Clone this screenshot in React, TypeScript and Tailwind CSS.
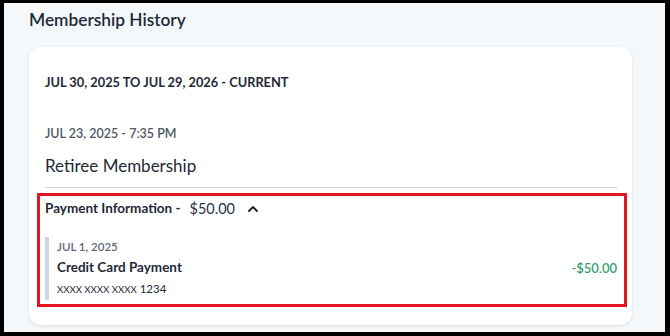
import { ChevronUp } from "lucide-react"

const FONT = "font-['Lato','Noto_Sans',sans-serif]"

export default function App() {
  return (
    <div className={`w-[670px] h-[336px] bg-black pt-[3px] pl-[4px] pr-[5px] pb-[4px] ${FONT}`}>
      <div className="h-full bg-[#f5f8fb] pl-[25px] pr-[33px]">
        <h2 className="pt-[4px] h-[44px] text-[17.3px] leading-[26px] font-semibold text-[#1e2a3a]">Membership History</h2>

        <div className="relative bg-white rounded-[12px] shadow-[0_1px_3px_rgba(15,23,42,0.12)] pl-[16px] pr-[15px] pt-[25px] pb-[25px]">
          <p className="text-[12.8px] leading-[20px] font-bold text-[#1f2937]">JUL 30, 2025 TO JUL 29, 2026 - CURRENT</p>

          <p className="mt-[33px] text-[12.5px] leading-[18px] font-semibold text-[#4d5765]">JUL 23, 2025 - 7:35 PM</p>
          <p className="mt-[11px] text-[17px] leading-[24px] text-[#1f2937]">Retiree Membership</p>

          <div className="mt-[9px] border-t border-[#cfd6df]" />

          <div className="mt-[10px] flex items-center h-[21px]">
            <span className="text-[13.5px] font-bold text-[#1f2937]">Payment Information -</span>
            <span className="ml-[9px] text-[14.5px] text-[#2a3444]">$50.00</span>
            <ChevronUp className="ml-[10px] w-[16px] h-[16px] text-[#1f2937]" strokeWidth={3} />
          </div>

          <div className="mt-[18px] flex items-center border-l-[4px] border-[#ccd5e0] pl-[8px] py-[2px]">
            <div className="flex-1">
              <p className="text-[11.5px] leading-[16px] font-semibold text-[#5f6975]">JUL 1, 2025</p>
              <p className="mt-[2px] text-[13.5px] leading-[20px] font-bold text-[#1f2937]">Credit Card Payment</p>
              <p className="mt-[2px] leading-[16px] text-[#1f2937]">
                <span className="text-[9.6px]">XXXX XXXX XXXX</span>
                <span className="ml-[3px] text-[11.5px]">1234</span>
              </p>
            </div>
            <span className="text-[13px] font-semibold text-[#3a9f6f]">-$50.00</span>
          </div>

          <div className="absolute left-[8px] top-[146px] w-[590px] h-[114px] border-[3px] border-[#e3151f] pointer-events-none" />
        </div>
      </div>
    </div>
  )
}
